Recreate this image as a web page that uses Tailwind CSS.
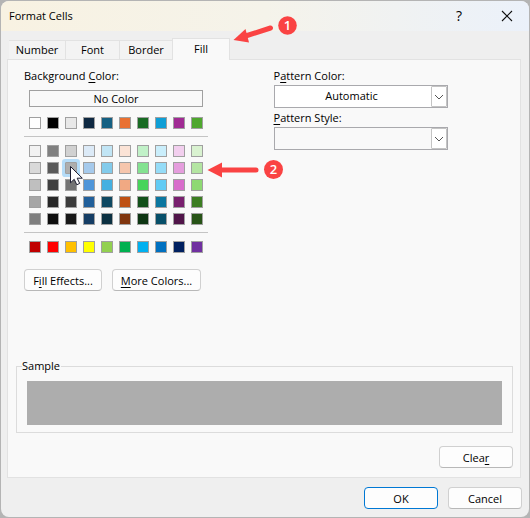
<!DOCTYPE html>
<html lang="en">

<head>
    <meta charset="UTF-8">
    <meta name="viewport" content="width=device-width, initial-scale=1.0">
    <title>Format Cells</title>
    <script src="https://cdn.jsdelivr.net/npm/@tailwindcss/browser@4"></script>
</head>

<body class="bg-[#b4b4b4] min-h-screen flex flex-col p-px font-['Open_Sans','Noto_Sans',sans-serif] text-[11px] text-black">
    <main class="relative flex-1 flex flex-col bg-[#efefef] rounded-lg overflow-hidden">
        <header class="flex items-center justify-between h-[30px] pl-2 pr-4 bg-gradient-to-r from-[#f8f2e2] via-[#f5f3ea] via-50% to-[#ebf1fa]">
            <h1>Format Cells</h1>
            <div class="flex items-center gap-9">
                <button aria-label="Help" class="w-3 text-sm leading-4 font-medium">?</button>
                <button aria-label="Close" class="w-3">
                    <svg class="size-3" viewBox="0 0 12 12" fill="none" stroke="#111" stroke-width="1.1"><path d="M1 1l10 10M11 1L1 11" /></svg>
                </button>
            </div>
        </header>

        <nav class="flex items-end h-[29px] pl-2 -mb-px relative" role="tablist">
            <button role="tab" class="w-[57px] h-[19px] mb-px pt-px bg-[#f3f3f3] border-t border-r border-[#e2e2e2]">Number</button>
            <button role="tab" class="w-[54px] h-[19px] mb-px pt-px bg-[#f3f3f3] border-t border-r border-[#e2e2e2]">Font</button>
            <button role="tab" class="w-[52px] h-[19px] mb-px pt-px bg-[#f3f3f3] border-t border-[#e2e2e2]">Border</button>
            <button role="tab" aria-selected="true" class="w-[58px] h-[22px] bg-[#f9f9f9] border border-b-0 border-[#e2e2e2]">Fill</button>
        </nav>

        <section class="ml-[6px] mr-2 pl-2 pr-[7px] pt-2 pb-[9px] bg-[#f9f9f9] border border-[#e2e2e2]">
            <div class="grid grid-cols-2 pl-2">
                <div class="w-[184px]">
                    <p class="leading-4">Background <u class="underline-offset-2">C</u>olor:</p>
                    <button class="block w-[174px] h-[17px] mt-[6px] ml-[5px] border border-[#a0a0a0] leading-none">No Color</button>
                    <div id="theme" class="grid grid-cols-10 gap-x-[6px] mt-[10px] ml-[5px] w-[174px]"></div>
                    <hr class="mt-[7px] border-[#c4c4c4]">
                    <div id="tints" class="grid grid-cols-10 gap-x-[6px] gap-y-[5px] mt-2 ml-[5px] w-[174px]"></div>
                    <hr class="mt-[7px] border-[#c4c4c4]">
                    <div id="standard" class="grid grid-cols-10 gap-x-[6px] mt-2 ml-[5px] w-[174px]"></div>
                    <div class="flex gap-[10px] mt-4">
                        <button class="w-[78px] h-[22px] shrink-0 bg-[#fdfdfd] border border-[#d0d0d0] border-b-[#b8b8b8] rounded whitespace-nowrap leading-none">F<u class="underline-offset-2">i</u>ll Effects...</button>
                        <button class="w-[89px] h-[22px] shrink-0 bg-[#fdfdfd] border border-[#d0d0d0] border-b-[#b8b8b8] rounded whitespace-nowrap leading-none"><u class="underline-offset-2">M</u>ore Colors...</button>
                    </div>
                </div>

                <div class="w-[174px] ml-[5px]">
                    <label for="patternColor" class="block leading-4">P<u class="underline-offset-2">a</u>ttern Color:</label>
                    <div class="relative mt-px">
                        <select id="patternColor" class="appearance-none block w-full h-[23px] pr-[18px] bg-white border border-[#a9a9ad] text-center">
                            <option>Automatic</option>
                        </select>
                        <span class="absolute right-px top-px w-4 h-[21px] flex items-center justify-center bg-white border border-[#c4c4c4] rounded-[1px] pointer-events-none">
                            <svg class="w-[10px] h-[6px]" viewBox="0 0 10 6" fill="none" stroke="#555"><path d="M1 1l4 4 4-4" /></svg>
                        </span>
                    </div>
                    <label for="patternStyle" class="block leading-4 mt-[2px]"><u class="underline-offset-2">P</u>attern Style:</label>
                    <div class="relative mt-px">
                        <select id="patternStyle" class="appearance-none block w-full h-[23px] pr-[18px] bg-[#f9f9f9] border border-[#a9a9ad]">
                            <option></option>
                        </select>
                        <span class="absolute right-px top-px w-4 h-[21px] flex items-center justify-center bg-white border border-[#c4c4c4] rounded-[1px] pointer-events-none">
                            <svg class="w-[10px] h-[6px]" viewBox="0 0 10 6" fill="none" stroke="#555"><path d="M1 1l4 4 4-4" /></svg>
                        </span>
                    </div>
                </div>
            </div>

            <fieldset class="mt-[67px] pt-[7px] px-[10px] pb-[7px] border border-[#dcdcdc]">
                <legend class="-ml-[5px] pr-px leading-4">Sample</legend>
                <div class="h-11 bg-[#adadad]"></div>
            </fieldset>

            <div class="flex justify-end mt-[13px]">
                <button class="w-[74px] h-[22px] bg-[#fdfdfd] border border-[#d0d0d0] border-b-[#b8b8b8] rounded leading-none">Clea<u class="underline-offset-2">r</u></button>
            </div>
        </section>

        <footer class="flex justify-end gap-[10px] pt-[9px] pr-[7px] pb-2">
            <button class="w-[74px] h-[22px] bg-[#fdfdfd] border border-[#0078d4] rounded leading-none">OK</button>
            <button class="w-[74px] h-[22px] bg-[#fdfdfd] border border-[#d0d0d0] border-b-[#b8b8b8] rounded leading-none">Cancel</button>
        </footer>

        <!-- step markers and mouse pointer -->
        <svg class="absolute -left-px -top-px w-[300px] h-[200px] pointer-events-none" viewBox="0 0 300 200">
            <g fill="#fa4343" stroke="#fa4343">
                <path d="M244 36.500L270.500 28" stroke-width="5" stroke-linecap="round" />
                <path d="M233.500 40L245.500 29l3.500 13.500z" stroke="none" />
                <path d="M220 170h36" stroke-width="5" stroke-linecap="round" />
                <path d="M207.500 170L222 162.500v15z" stroke="none" />
                <circle cx="287.500" cy="25.500" r="9.300" stroke="none" />
                <circle cx="273.500" cy="169.500" r="9.500" stroke="none" />
            </g>
            <g fill="#fff" font-family="Open Sans" font-size="13" font-weight="600" text-anchor="middle">
                <text x="287.500" y="30">1</text>
                <text x="273.500" y="174">2</text>
            </g>
            <path d="M70.500 166.500v16.300l3.700-3.500 2.600 5.500 2.900-1.400-2.500-5.200h5.100z" fill="#fff" stroke="#1a1a2e" />
        </svg>
    </main>

    <template id="swatch">
        <button class="block size-3 border border-[#a0a0a0]"></button>
    </template>

    <script>
        const palettes = {
            theme: "ffffff 000000 e8e8e8 0e2841 156082 e97132 196b24 0f9ed5 a02b93 4ea72e",
            tints: "f2f2f2 808080 d1d1d1 dceaf7 c1e5f5 fbe3d6 c1f1c8 caeefb f2cfee d9f2d0 " +
                "d9d9d9 595959 aeaeae a6caec 83cbeb f6c6ad 84e291 95dcf7 e59edd b4e5a2 " +
                "bfbfbf 404040 747474 4e95d9 45b0e1 f1a983 47d45a 61cbf4 d86dcb 8ed973 " +
                "a6a6a6 262626 3b3b3b 215f9a 0f4861 be5014 12501a 0b769f 78206e 3c7d22 " +
                "7f7f7f 0d0d0d 171717 153d64 0b3041 80350e 0d3512 074f69 501549 275317",
            standard: "c00000 ff0000 ffc000 ffff00 92d050 00b050 00b0f0 0070c0 002060 7030a0"
        };
        const template = document.getElementById("swatch");

        for (const id in palettes) {
            palettes[id].split(" ").forEach(color => {
                const button = template.content.firstElementChild.cloneNode();
                button.style.background = "#" + color;
                button.setAttribute("aria-label", "#" + color);
                if (color === "aeaeae") {
                    button.classList.add("ring-3", "ring-[#b5dcf8]", "rounded-[1px]");
                }
                document.getElementById(id).appendChild(button);
            });
        }
    </script>
</body>

</html>
